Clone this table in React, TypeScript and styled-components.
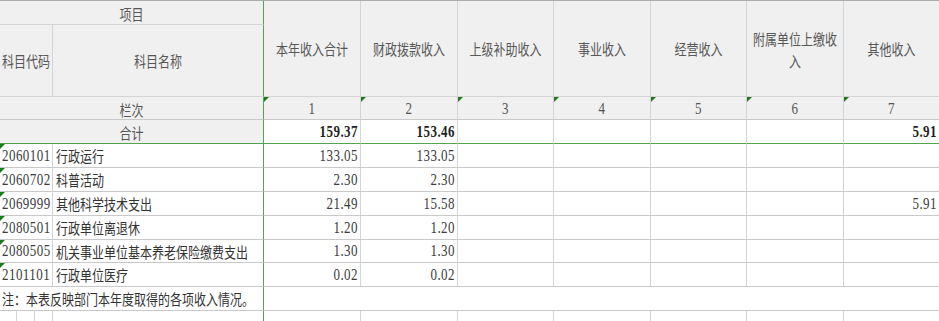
import React from "react";
import styled, { createGlobalStyle, css } from "styled-components";

const Global = createGlobalStyle`
  html, body { margin: 0; padding: 0; background: #ffffff; overflow: hidden; }
  body { font-family: "Noto Sans CJK SC", "Noto Sans", sans-serif; }
`;

const GRID = "#d4d4d4";
const HLINE = "#c9c9c9";
const GREEN = "#52a352";
const HEAD = "#f0f0f0";

type Line = "grid" | "hline" | "green" | "none";
const lineColor = (l: Line) =>
  l === "green"
    ? `1px solid ${GREEN}`
    : l === "grid"
    ? `1px solid ${GRID}`
    : l === "hline"
    ? `1px solid ${HLINE}`
    : "1px solid transparent";

const Sheet = styled.div`
  display: grid;
  grid-template-columns: 17px 18px 18px 211px 97px 97px 96px 97px 96px 97px 96px;
  grid-template-rows: 24px 72px 23px 24px 24px 24px 24px 24px 23px 24px 24px 20px;
  width: 940px;
  border-top: 1px solid #ababab;
`;

const Cell = styled.div<{
  $span?: number;
  $rows?: number;
  $bg?: string;
  $align?: "flex-start" | "center" | "flex-end";
  $right?: Line;
  $bottom?: Line;
  $mark?: boolean;
  $pad?: string;
}>`
  position: relative;
  box-sizing: border-box;
  grid-column: span ${(p) => p.$span ?? 1};
  grid-row: span ${(p) => p.$rows ?? 1};
  background: ${(p) => p.$bg ?? "#ffffff"};
  border-right: ${(p) => lineColor(p.$right ?? "grid")};
  border-bottom: ${(p) => lineColor(p.$bottom ?? "hline")};
  display: flex;
  align-items: center;
  justify-content: ${(p) => p.$align ?? "flex-start"};
  padding: ${(p) => p.$pad ?? "0 2px"};
  white-space: nowrap;
  min-width: 0;
  ${(p) =>
    p.$mark &&
    css`
      &::before {
        content: "";
        position: absolute;
        left: 0;
        top: 0;
        width: 0;
        height: 0;
        border-style: solid;
        border-width: 5px 5px 0 0;
        border-color: #1c7a1c transparent transparent transparent;
      }
    `}
`;

const Label = styled.span<{ $tone?: string }>`
  display: inline-block;
  font-family: "Noto Sans CJK SC", "Noto Sans", sans-serif;
  font-size: 12px;
  line-height: 17px;
  color: ${(p) => p.$tone ?? "#575757"};
  transform: scaleY(1.25);
  white-space: normal;
  text-align: center;
`;

const Num = styled.span<{ $bold?: boolean; $tone?: string }>`
  display: inline-block;
  font-family: "Liberation Serif", "Times New Roman", serif;
  font-size: 13px;
  line-height: 16px;
  letter-spacing: 0.45px;
  font-weight: ${(p) => (p.$bold ? 700 : 400)};
  color: ${(p) => p.$tone ?? "#3c3c3c"};
  transform: scaleY(1.3);
`;

const headers = [
  "本年收入合计",
  "财政拨款收入",
  "上级补助收入",
  "事业收入",
  "经营收入",
  "附属单位上缴收入",
  "其他收入",
];

const totals = ["159.37", "153.46", "", "", "", "", "5.91"];

const rows: { code: string; name: string; vals: string[] }[] = [
  { code: "2060101", name: "行政运行", vals: ["133.05", "133.05", "", "", "", "", ""] },
  { code: "2060702", name: "科普活动", vals: ["2.30", "2.30", "", "", "", "", ""] },
  { code: "2069999", name: "其他科学技术支出", vals: ["21.49", "15.58", "", "", "", "", "5.91"] },
  { code: "2080501", name: "行政单位离退休", vals: ["1.20", "1.20", "", "", "", "", ""] },
  { code: "2080505", name: "机关事业单位基本养老保险缴费支出", vals: ["1.30", "1.30", "", "", "", "", ""] },
  { code: "2101101", name: "行政单位医疗", vals: ["0.02", "0.02", "", "", "", "", ""] },
];

export default function App() {
  return (
    <>
      <Global />
      <Sheet>
        {/* header row 1 */}
        <Cell $span={4} $bg={HEAD} $align="center" $right="green" $bottom="grid" $pad="2px 2px 0">
          <Label>项目</Label>
        </Cell>
        {headers.map((h) => (
          <Cell key={h} $rows={2} $bg={HEAD} $align="center" $pad="0 3px" $bottom="grid">
            <Label>{h}</Label>
          </Cell>
        ))}
        {/* header row 2 */}
        <Cell $span={3} $bg={HEAD} $align="center" $pad="0" $bottom="grid">
          <Label>科目代码</Label>
        </Cell>
        <Cell $bg={HEAD} $align="center" $right="green" $bottom="grid">
          <Label>科目名称</Label>
        </Cell>
        {/* 栏次 */}
        <Cell $span={4} $bg={HEAD} $align="center" $right="green" $pad="2px 2px 0">
          <Label>栏次</Label>
        </Cell>
        {headers.map((h, i) => (
          <Cell key={`n${h}`} $bg={HEAD} $align="center" $mark $pad="2px 2px 0">
            <Num $tone="#555555">{i + 1}</Num>
          </Cell>
        ))}
        {/* 合计 */}
        <Cell $span={4} $bg={HEAD} $align="center" $right="green" $bottom="green" $pad="2px 2px 0">
          <Label>合计</Label>
        </Cell>
        {totals.map((t, i) => (
          <Cell key={`t${i}`} $align="flex-end" $bottom="green">
            {t && <Num $bold $tone="#1f1f1f">{t}</Num>}
          </Cell>
        ))}
        {/* data rows */}
        {rows.map((r) => (
          <React.Fragment key={r.code}>
            <Cell $span={3} $mark $pad="0 0 0 2px">
              <Num>{r.code}</Num>
            </Cell>
            <Cell $right="green" $pad="0 3px">
              <Label $tone="#333333">{r.name}</Label>
            </Cell>
            {r.vals.map((v, i) => (
              <Cell key={`${r.code}-${i}`} $align="flex-end">
                {v && <Num>{v}</Num>}
              </Cell>
            ))}
          </React.Fragment>
        ))}
        {/* note */}
        <Cell $span={4} $right="green">
          <Label $tone="#333333">注：本表反映部门本年度取得的各项收入情况。</Label>
        </Cell>
        <Cell $span={7} $right="none" />
        {/* trailing partial row */}
        <Cell $bottom="none" />
        <Cell $bottom="none" />
        <Cell $bottom="none" />
        <Cell $right="green" $bottom="none" />
        {headers.map((h) => (
          <Cell key={`b${h}`} $bottom="none" />
        ))}
      </Sheet>
    </>
  );
}
